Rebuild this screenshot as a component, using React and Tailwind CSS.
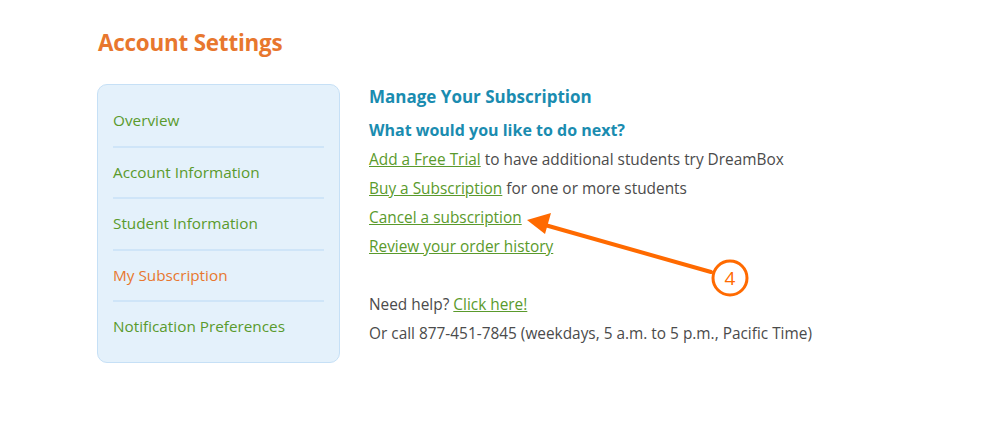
import React from "react";

const font = { fontFamily: '"Open Sans", "DejaVu Sans", sans-serif' };

function NavItem({ label, active, last }) {
  return (
    <div className={last ? "" : "border-b-2 border-[#cfe5f8]"}>
      <div className={`h-[49.5px] flex items-center text-[15.3px] ${active ? "text-[#e8772e]" : "text-[#5a9a2c]"}`}>
        {label}
      </div>
    </div>
  );
}

export default function App() {
  return (
    <div className="relative w-[996px] h-[427px] bg-white" style={font}>
      <div className="pl-[98px] pt-[27px]">
        <h1 className="text-[22.4px] font-bold text-[#e8772e] leading-[32px] tracking-[-0.2px]">Account Settings</h1>
        <div className="flex mt-[25px]">
          <div className="w-[243px] h-[279px] -ml-[1px] rounded-[10px] border border-[#c6e0f6] bg-[#e4f1fb] px-[15px] pt-[11px]">
            <div className="w-[211px]">
              <NavItem label="Overview" />
              <NavItem label="Account Information" />
              <NavItem label="Student Information" />
              <NavItem label="My Subscription" active />
              <NavItem label="Notification Preferences" last />
            </div>
          </div>
          <div className="ml-[29px] text-[15.4px] text-[#4b4b4b] -mt-[1px]">
            <h2 className="text-[17px] font-bold text-[#1a8cb0] leading-[26px] mt-[1px]">Manage Your Subscription</h2>
            <h3 className="text-[16px] font-bold text-[#1a8cb0] leading-[26px] mt-[7px]">What would you like to do next?</h3>
            <div className="leading-[29px] mt-[2px]">
              <p><a className="underline text-[#5a9a2c]">Add a Free Trial</a> to have additional students try DreamBox</p>
              <p><a className="underline text-[#5a9a2c]">Buy a Subscription</a> for one or more students</p>
              <p><a className="underline text-[#5a9a2c]">Cancel a subscription</a></p>
              <p><a className="underline text-[#5a9a2c]">Review your order history</a></p>
              <p className="mt-[29px]">Need help? <a className="underline text-[#5a9a2c]">Click here!</a></p>
              <p>Or call 877-451-7845 (weekdays, 5 a.m. to 5 p.m., Pacific Time)</p>
            </div>
          </div>
        </div>
      </div>
      <svg className="absolute left-0 top-0 pointer-events-none" width="996" height="427">
        <line x1="711" y1="272" x2="545" y2="225" stroke="#ff6a00" strokeWidth="4" strokeLinecap="round" />
        <polygon points="527,220 551,213 545,234" fill="#ff6a00" />
        <circle cx="730" cy="278" r="17" fill="white" stroke="#ff6a00" strokeWidth="3" />
        <text x="730" y="285" textAnchor="middle" fontSize="19" fill="#ff6a00" fontFamily="Open Sans, sans-serif">4</text>
      </svg>
    </div>
  );
}
